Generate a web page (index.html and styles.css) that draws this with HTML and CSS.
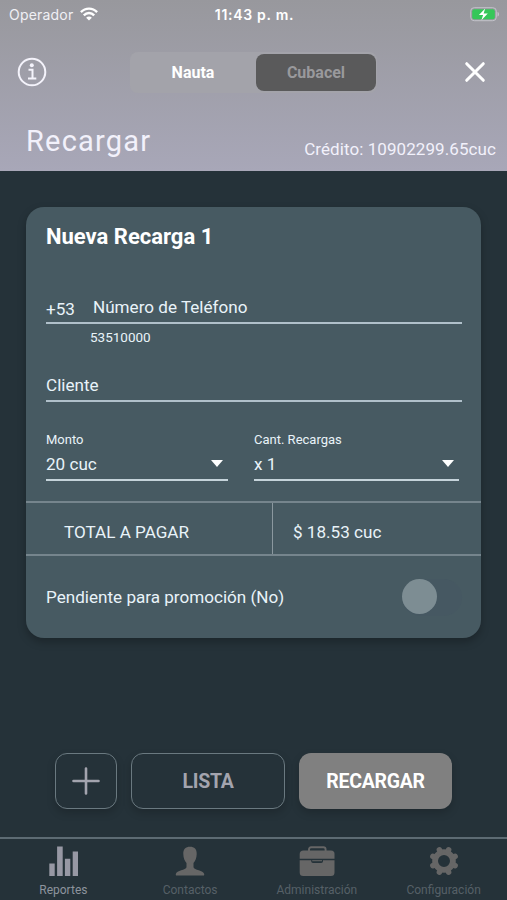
FILE: index.html
```html
<!DOCTYPE html>
<html lang="es">
  <head>
    <meta charset="utf-8">
    <title>Recargar</title>
    <link rel="stylesheet" href="styles.css">
  </head>
  <body>
    <div class="app">
      <header class="header">
        <div class="statusBar">
          <div class="carrier">
            <span>Operador</span>
            <svg width="18" height="14" viewBox="0 0 18 14" fill="none" stroke="#fff" stroke-width="2.4">
              <path d="M0.9 5.2C5.5 0.4 12.5 0.4 17.1 5.2"/>
              <path d="M3.8 8.3C6.8 5.2 11.2 5.2 14.2 8.3"/>
              <path d="M9 13.6L6.1 10.7C7.7 9.1 10.3 9.1 11.9 10.7Z" fill="#fff" stroke="none"/>
            </svg>
          </div>
          <div class="clock">11:43 p. m.</div>
          <svg class="battery" width="30" height="15" viewBox="0 0 30 15">
            <rect x="0.7" y="0.7" width="25.6" height="13" rx="3.5" fill="none" stroke="#c3c3cb"/>
            <rect x="2.2" y="2.2" width="22.6" height="10" rx="2" fill="#35c759"/>
            <path d="M27.5 5v4.5c2-0.6 2-3.9 0-4.5z" fill="#c3c3cb"/>
            <path d="M15.2 1.5L8.9 8h4.2l-1.7 5.2L17.8 6.5h-4.2z" fill="#fff"/>
          </svg>
        </div>

        <div class="topBar">
          <svg width="30" height="30" viewBox="0 0 30 30" fill="none" stroke="#f4f3fb" stroke-width="2">
            <circle cx="15" cy="15" r="13.3"/>
            <circle cx="14.8" cy="8.3" r="2" fill="#f4f3fb" stroke="none"/>
            <path d="M11.5 12.8h4v8.6M11 21.6h8.3"/>
          </svg>
          <div class="tabs">
            <button class="tab">Nauta</button>
            <button class="tab tabActive">Cubacel</button>
          </div>
          <svg width="22" height="22" viewBox="0 0 22 22" fill="none" stroke="#fff" stroke-width="3" stroke-linecap="round">
            <path d="M2.7 2.7L19.3 19.3M19.3 2.7L2.7 19.3"/>
          </svg>
        </div>

        <div class="titleRow">
          <h1>Recargar</h1>
          <p class="credit">Crédito: 10902299.65cuc</p>
        </div>
      </header>

      <main class="content">
        <div class="card">
          <h2>Nueva Recarga 1</h2>
          <div class="field phone">
            <span class="prefix">+53</span>
            <span class="number">Número de Teléfono</span>
          </div>
          <p class="hint">53510000</p>
          <div class="field client">Cliente</div>

          <div class="selects">
            <div class="select">
              <label>Monto</label>
              <div class="selectValue amount"><span>20 cuc</span><i class="arrow"></i></div>
            </div>
            <div class="select">
              <label>Cant. Recargas</label>
              <div class="selectValue count"><span>x 1</span><i class="arrow"></i></div>
            </div>
          </div>

          <div class="total">
            <div class="totalLabel">TOTAL A PAGAR</div>
            <div class="totalValue">$ 18.53 cuc</div>
          </div>

          <div class="promo">
            <span>Pendiente para promoción (No)</span>
            <div class="switch"><div class="knob"></div></div>
          </div>
        </div>

        <div class="buttons">
          <button class="button addButton">
            <svg width="28" height="28" viewBox="0 0 28 28" stroke="#a3a4ae" stroke-width="2.6" stroke-linecap="round">
              <path d="M14 1.5v25M1.5 14h25"/>
            </svg>
          </button>
          <button class="button listButton">LISTA</button>
          <button class="button rechargeButton">RECARGAR</button>
        </div>
      </main>

      <nav class="navBar">
        <a class="navItem navActive">
          <svg width="30" height="30" viewBox="0 0 30 30" fill="currentColor">
            <path d="M1.3 17.5h5.4v12.5h-5.4zM9.1 0.5h5.6v29.5h-5.600zM16.900 12.8h5.4v17.2h-5.4zM24.7 5.6h5.3v24.4h-5.3z"/>
          </svg>
          <span>Reportes</span>
        </a>
        <a class="navItem">
          <svg width="30" height="30" viewBox="0 0 30 30" fill="currentColor">
            <path d="M15 0.8c4.300 0 6.900 2.500 6.700 7.200-0.100 4-1.300 7-3.200 9.100v4.200c0.600 2.700 10 3.200 10.700 6.700 0.100 0.800-0.100 1.400-0.200 1.500H1c-0.200-0.300-0.300-0.900-0.200-1.500 0.700-3.500 10.100-4 10.700-6.700v-4.200c-1.900-2.100-3.100-5.100-3.200-9.100-0.200-4.700 2.400-7.200 6.700-7.200z"/>
          </svg>
          <span>Contactos</span>
        </a>
        <a class="navItem">
          <svg width="36" height="30" viewBox="0 0 36 30" fill="currentColor">
            <path d="M10 5V3.500Q10 1.300 12.200 1.300H24.400Q26.600 1.300 26.600 3.500V5" fill="none" stroke="currentColor" stroke-width="1.9"/>
            <path d="M4.500 4.500h27.500Q35.500 4.500 35.500 8v4.700H0.700V8Q0.700 4.500 4.500 4.500z"/>
            <path d="M0.700 14.200h11.500v1q0 1.800 1.800 1.800h8.200q1.800 0 1.800-1.800v-1h11.500v12.300q0 3.500-3.500 3.500H4.200q-3.500 0-3.500-3.500z"/>
            <path d="M13.200 14.200h9.800v1h-9.800z"/>
          </svg>
          <span>Administración</span>
        </a>
        <a class="navItem">
          <svg width="30" height="30" viewBox="0 0 30 30" fill="none" stroke="currentColor">
            <circle cx="15" cy="15" r="8.9" stroke-width="5.8"/>
            <g stroke-width="5.6" stroke-linecap="round" transform="rotate(22.5 15 15)">
              <path d="M15 3v2M15 25v2M3 15h2M25 15h2"/>
              <path d="M15 3v2M15 25v2M3 15h2M25 15h2" transform="rotate(45 15 15)"/>
            </g>
          </svg>
          <span>Configuración</span>
        </a>
      </nav>
    </div>
  </body>
</html>
```

FILE: styles.css
```css
* {
  box-sizing: border-box;
}

body {
  margin: 0;
  font-family: Roboto, "Liberation Sans", sans-serif;
  color: #e9f3f9;
  background-color: #253239;
}

h1, h2, p {
  margin: 0;
  white-space: nowrap;
}

button {
  padding: 0;
  border: none;
  font-family: inherit;
}

svg {
  display: block;
}

.app {
  display: flex;
  flex-direction: column;
  height: 900px;
  overflow: hidden;
}

.header {
  height: 171px;
  background: linear-gradient(#98989d, #a8a7b8);
}

.statusBar {
  display: grid;
  grid-template-columns: 1fr auto 1fr;
  align-items: center;
  height: 28px;
  padding: 0 7px 0 9px;
  font-family: Inter, sans-serif;
  font-size: 14px;
}

.carrier {
  display: flex;
  align-items: center;
  gap: 7px;
  color: #f0f0f5;
  letter-spacing: 0.2px;
}

.clock {
  color: #fff;
  font-weight: 600;
  letter-spacing: 0.7px;
}

.battery {
  justify-self: end;
}

.topBar {
  display: flex;
  align-items: center;
  justify-content: space-between;
  height: 88px;
  padding: 0 21px 0 17px;
}

.tabs {
  display: flex;
  align-items: center;
  width: 247px;
  height: 41px;
  margin-left: -4px;
  border-radius: 8px;
  background-color: #a3a3aa;
}

.tab {
  width: 126px;
  height: 37px;
  border-radius: 8px;
  background: none;
  color: #fff;
  font-size: 16px;
  font-weight: 700;
}

.tabActive {
  width: 120px;
  background-color: #5a5a5b;
  color: #99999c;
}

.titleRow {
  display: flex;
  align-items: flex-start;
  justify-content: space-between;
  padding: 8px 11px 0 26px;
  color: #f2f1fb;
}

.titleRow h1 {
  font-size: 29px;
  font-weight: 400;
  line-height: 34px;
  letter-spacing: 1.2px;
}

.credit {
  padding-top: 15px;
  font-size: 17px;
  line-height: 20px;
  letter-spacing: 0.08px;
}

.content {
  flex: 1;
  padding-top: 36px;
}

.card {
  width: 455px;
  height: 431px;
  margin: 0 auto 0 26px;
  padding-top: 18px;
  border-radius: 18px;
  background-color: #475a62;
  box-shadow: 0 4px 8px rgba(0, 0, 0, 0.25);
  font-size: 17.1px;
}

.card h2 {
  padding-left: 20px;
  color: #fff;
  font-size: 22px;
  font-weight: 700;
  line-height: 24px;
}

.field {
  margin: 0 19px 0 20px;
  border-bottom: 2px solid #b0c0ca;
}

.phone {
  display: flex;
  height: 30px;
  margin-top: 45px;
  line-height: 24px;
}

.prefix {
  width: 47px;
  padding-top: 3px;
}

.number {
  padding-top: 1px;
}

.hint {
  padding-left: 64px;
  font-size: 13.5px;
  line-height: 27px;
}

.client {
  height: 51px;
  padding-top: 22px;
  line-height: 24px;
}

.selects {
  display: flex;
  gap: 26px;
  height: 99px;
  padding: 30px 0 0 20px;
}

.select label {
  display: block;
  font-size: 13px;
  line-height: 16px;
}

.selectValue {
  display: flex;
  align-items: center;
  justify-content: space-between;
  height: 33px;
  padding-right: 5px;
  border-bottom: 2px solid #c5d3da;
}

.amount {
  width: 182px;
}

.count {
  width: 205px;
}

.arrow {
  border: 6px solid transparent;
  border-top: 7px solid #fff;
  border-bottom: none;
}

.total {
  display: flex;
  height: 55px;
  border-top: 2px solid #76858d;
  border-bottom: 2px solid #76858d;
  line-height: 59px;
}

.totalLabel {
  width: 247px;
  padding-left: 38px;
  border-right: 1px solid #8b989f;
}

.totalValue {
  padding-left: 20px;
}

.promo {
  display: flex;
  align-items: center;
  justify-content: space-between;
  height: 82px;
  padding: 0 19px 0 20px;
}

.switch {
  width: 60px;
  height: 37px;
  border-radius: 19px;
  background-color: #465862;
}

.knob {
  width: 35px;
  height: 35px;
  border-radius: 50%;
  background-color: #7d8d93;
}

.buttons {
  display: flex;
  gap: 14px;
  padding: 115px 0 0 55px;
}

.button {
  display: flex;
  align-items: center;
  justify-content: center;
  height: 56px;
  border: 1.5px solid #6a7980;
  border-radius: 12px;
  background-color: #253239;
  color: #a3a4ae;
  font-size: 19.5px;
  font-weight: 700;
  letter-spacing: -0.3px;
  box-shadow: 0 4px 8px rgba(0, 0, 0, 0.18);
}

.addButton {
  width: 62px;
}

.listButton {
  width: 154px;
}

.rechargeButton {
  width: 153px;
  border: none;
  background-color: #808080;
  color: #fff;
}

.navBar {
  display: flex;
  height: 63px;
  border-top: 2px solid #5d6b73;
}

.navItem {
  display: flex;
  flex: 1;
  flex-direction: column;
  align-items: center;
  padding-top: 7px;
  color: #666;
  font-size: 12px;
}

.navItem span {
  margin-top: 7px;
  color: #566067;
}

.navActive {
  color: #9798a4;
}

.navActive span {
  color: #8d949d;
}
```
